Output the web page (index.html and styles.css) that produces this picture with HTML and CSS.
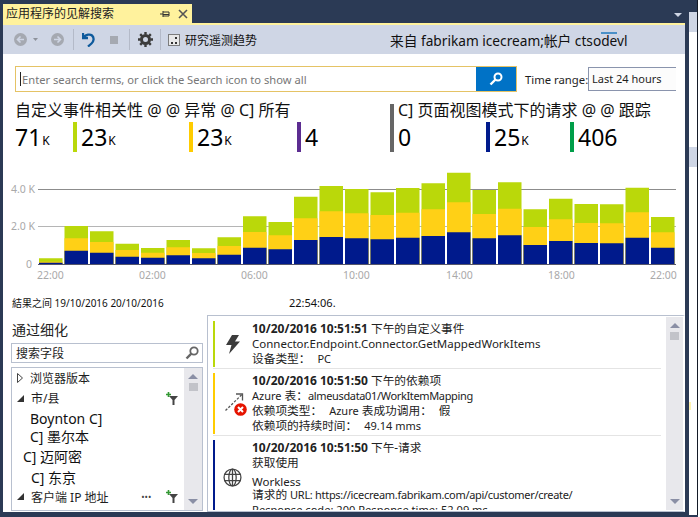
FILE: index.html
```html
<!DOCTYPE html>
<html lang="zh-CN">
<head>
  <meta charset="UTF-8">
  <title>应用程序的见解搜索</title>
  <link rel="stylesheet" href="styles.css">
</head>
<body>
  <div class="shell">
    <div class="window">
      <div class="tabbar">
        <div class="tab">
          <span class="tab-title">应用程序的见解搜索</span>
          <svg class="tab-pin" width="10" height="10" viewBox="0 0 10 10"><path d="M0 5h3M3 2v6M3 3h6v4H3M3 5.500h6" fill="none" stroke="#333" stroke-width="1"/></svg>
          <svg class="tab-close" width="10" height="10" viewBox="0 0 10 10"><path d="M1 1l8 8M9 1l-8 8" stroke="#555" stroke-width="1.600"/></svg>
        </div>
        <svg class="tab-menu" width="8" height="4" viewBox="0 0 8 4"><path d="M0 0h8L4 4z" fill="#cfd6e5"/></svg>
      </div>

      <div class="toolbar">
        <svg class="tool back" width="13" height="13" viewBox="0 0 13 13"><circle cx="6.500" cy="6.500" r="6.500" fill="#a5a9b1"/><path d="M10 6.500H4M6.500 3.500l-3 3 3 3" fill="none" stroke="#cfd6e5" stroke-width="1.600"/></svg>
        <svg class="tool caret" width="5" height="3" viewBox="0 0 5 3"><path d="M0 0h5L2.500 3z" fill="#8d929b"/></svg>
        <svg class="tool forward" width="13" height="13" viewBox="0 0 13 13"><circle cx="6.500" cy="6.500" r="6.500" fill="#a5a9b1"/><path d="M3 6.500h6M6.500 3.500l3 3-3 3" fill="none" stroke="#cfd6e5" stroke-width="1.600"/></svg>
        <span class="tool-sep first"></span>
        <svg class="tool undo" width="13" height="15" viewBox="0 0 13 15"><path d="M1 1v5h5M1.500 5.500C4 2.500 8 1.800 10 3.500c2.500 2.200 1.800 6-.5 8L6 14.500" fill="none" stroke="#0e5a9c" stroke-width="2.300"/></svg>
        <span class="tool stop"></span>
        <span class="tool-sep second"></span>
        <svg class="tool gear" width="15" height="15" viewBox="0 0 15 15"><circle cx="7.500" cy="7.500" r="4" fill="none" stroke="#3c3c3c" stroke-width="3"/><path d="M7.500 0v15M0 7.500h15M2.200 2.200l10.600 10.600M12.800 2.200L2.200 12.800" stroke="#3c3c3c" stroke-width="2.400" stroke-dasharray="2.600 9.800 2.600"/></svg>
        <span class="tool-sep third"></span>
        <svg class="tool trend" width="12" height="12" viewBox="0 0 12 12"><rect x=".5" y=".5" width="11" height="11" fill="#e8e8e8" stroke="#7c7c7c"/><path d="M3 8h2v2H3zM7 3h2v2H7zM7 8h2v2H7z" fill="#333"/></svg>
        <span class="tool-label">研究遥测趋势</span>
        <span class="account">来自 fabrikam icecream;帐户 ctsodevl</span>
        <span class="account-mark"></span>
      </div>

      <div class="content">
        <div class="search-row">
          <div class="search-box">
            <span class="cursor"></span>
            <span class="search-hint">Enter search terms, or click the Search icon to show all</span>
            <div class="search-btn">
              <svg width="14" height="14" viewBox="0 0 14 14"><circle cx="9" cy="5" r="3.500" fill="none" stroke="#fff" stroke-width="2"/><path d="M6.500 7.500L1.500 12.500" stroke="#fff" stroke-width="2.400"/></svg>
            </div>
          </div>
          <span class="range-label">Time range:</span>
          <div class="range-select">Last 24 hours</div>
        </div>

        <div class="metrics">
          <div class="metric-group left">
            <div class="metric-title">自定义事件相关性 @ @ 异常 @ C] 所有</div>
            <div class="metric-row">
              <div class="metric w58"><span class="num">71</span><span class="unit">K</span></div>
              <div class="metric lime w116"><span class="num">23</span><span class="unit">K</span></div>
              <div class="metric yellow w108"><span class="num">23</span><span class="unit">K</span></div>
              <div class="metric purple"><span class="num">4</span></div>
            </div>
          </div>
          <div class="metric-group right">
            <div class="metric-title">C] 页面视图模式下的请求 @ @ 跟踪</div>
            <div class="metric-row">
              <div class="metric w88"><span class="num">0</span></div>
              <div class="metric navy w84"><span class="num">25</span><span class="unit">K</span></div>
              <div class="metric green"><span class="num">406</span></div>
            </div>
          </div>
        </div>

        <svg class="chart" width="682" height="130" viewBox="3 160 682 130">
          <path class="grid-a" d="M38 189.500H676"/>
          <path class="grid-b" d="M38 226.500H676"/>
          <path class="c-lime" d="M39 258.300h23.500V264H39zM64.500 226h23.500v38H64.500zM90 231.300h23.500V264H90zM115.500 243.700h23.500V264h-23.500zM141 248h23.500v16H141zM166.500 240h23.500v24h-23.500zM192 248.300h23.500V264H192zM217.500 237.300h23.500V264h-23.500zM243 216.300h23.500V264H243zM268.500 222h23.500v42h-23.500zM294 196.700h23.500V264H294zM319.500 186h23.500v78h-23.500zM345 189h23.500v75H345zM370.500 192.300h23.500V264h-23.500zM396 188h23.500v76H396zM421.500 183.300h23.500V264h-23.500zM447 172.700h23.500V264H447zM472.500 190h23.500v74h-23.500zM498 182.300h23.500V264H498zM523.500 209.300h23.500V264h-23.500zM549 198.700h23.500V264H549zM574.500 204h23.500v60h-23.500zM600 204.300h23.500V264H600zM625.500 187.700h23.500V264h-23.500zM651 217h23.500v47H651z"/>
          <path class="c-yellow" d="M39 261.700h23.500V264H39zM64.500 238.300h23.500V264H64.500zM90 242h23.500v22H90zM115.500 250h23.500v14h-23.500zM141 252.700h23.500V264H141zM166.500 247.300h23.500V264h-23.500zM192 253h23.500v11H192zM217.500 246h23.500v18h-23.500zM243 232h23.500v32H243zM268.500 235.300h23.500V264h-23.500zM294 218.300h23.500V264H294zM319.500 211.300h23.500V264h-23.500zM345 213.300h23.500V264H345zM370.500 215h23.500v49h-23.500zM396 212.700h23.500V264H396zM421.500 209.300h23.500V264h-23.500zM447 202.300h23.500V264H447zM472.500 214h23.500v50h-23.500zM498 208.700h23.500V264H498zM523.500 227h23.500v37h-23.500zM549 219.300h23.500V264H549zM574.500 223h23.500v41h-23.500zM600 223.300h23.500V264H600zM625.500 212.300h23.500V264h-23.500zM651 232.300h23.500V264H651z"/>
          <path class="c-navy" d="M39 262.700h23.500V264H39zM64.500 250.700h23.500V264H64.500zM90 252.700h23.500V264H90zM115.500 256.700h23.500V264h-23.500zM141 257.700h23.500V264H141zM166.500 255.300h23.500V264h-23.500zM192 258.300h23.500V264H192zM217.500 254.700h23.500V264h-23.500zM243 247.700h23.500V264H243zM268.500 249.300h23.500V264h-23.500zM294 240h23.500v24H294zM319.500 237h23.500v27h-23.500zM345 238.300h23.500V264H345zM370.500 239.300h23.500V264h-23.500zM396 237.700h23.500V264H396zM421.500 236h23.500v28h-23.500zM447 232.300h23.500V264H447zM472.500 238.300h23.500V264h-23.500zM498 235.300h23.500V264H498zM523.500 245h23.500v19h-23.500zM549 241h23.500v23H549zM574.500 243h23.500v21h-23.500zM600 243.300h23.500V264H600zM625.500 237.700h23.500V264h-23.500zM651 247.700h23.500V264H651z"/>
          <path class="axis" d="M38 264.500H676"/>
          <text class="tick" x="11" y="193">4.0 K</text>
          <text class="tick" x="11" y="230">2.0 K</text>
          <text class="tick" x="26" y="268">0</text>
          <text class="tick" x="37" y="279">22:00</text>
          <text class="tick" x="139" y="279">02:00</text>
          <text class="tick" x="241" y="279">06:00</text>
          <text class="tick" x="343" y="279">10:00</text>
          <text class="tick" x="446" y="279">14:00</text>
          <text class="tick" x="548" y="279">18:00</text>
          <text class="tick" x="650" y="279">22:00</text>
        </svg>

        <div class="result-row">
          <span class="result-range">結果之间 19/10/2016 20/10/2016</span>
          <span class="result-time">22:54:06.</span>
        </div>

        <div class="lower">
          <div class="refine">
            <div class="refine-title">通过细化</div>
            <div class="field-search">
              <span>搜索字段</span>
              <svg width="14" height="14" viewBox="0 0 14 14"><circle cx="9" cy="5" r="3.700" fill="none" stroke="#666" stroke-width="1.800"/><path d="M6.300 7.700L1.500 12.500" stroke="#666" stroke-width="2.400"/></svg>
            </div>
            <div class="tree">
              <div class="tree-list">
                <div class="tree-row head">
                  <svg class="arrow" width="6" height="10" viewBox="0 0 6 10"><path d="M.5 .5L5.500 5L.5 9.500z" fill="#fff" stroke="#444"/></svg>
                  <span>浏览器版本</span>
                </div>
                <div class="tree-row head">
                  <svg class="arrow" width="7" height="7" viewBox="0 0 7 7"><path d="M7 0v7H0z" fill="#333"/></svg>
                  <span>市/县</span>
                  <svg class="filter" width="12" height="13" viewBox="0 0 12 13"><path d="M3 4h9L8.500 8v5h-2V8z" fill="#444"/><path d="M2.500 0v5M0 2.500h5" stroke="#339933" stroke-width="1.600"/></svg>
                </div>
                <div class="tree-row city c1">Boynton C]</div>
                <div class="tree-row city c1 tight">C] 墨尔本</div>
                <div class="tree-row city c2">C] 迈阿密</div>
                <div class="tree-row city c3">C] 东京</div>
                <div class="tree-row head">
                  <svg class="arrow" width="7" height="7" viewBox="0 0 7 7"><path d="M7 0v7H0z" fill="#333"/></svg>
                  <span>客户端 IP 地址</span>
                  <span class="more">•••</span>
                  <svg class="filter" width="12" height="13" viewBox="0 0 12 13"><path d="M3 4h9L8.500 8v5h-2V8z" fill="#444"/><path d="M2.500 0v5M0 2.500h5" stroke="#339933" stroke-width="1.600"/></svg>
                </div>
              </div>
              <div class="scroll narrow">
                <span class="up"></span><span class="thumb"></span><span class="down"></span>
              </div>
            </div>
          </div>

          <div class="results">
            <div class="result-list">
              <div class="event lime-edge">
                <div class="event-icon">
                  <svg width="14" height="19" viewBox="0 0 14 19"><path d="M6 0h7L9 6.500h5L3 19l2.500-9H0z" fill="#3c3c3c"/></svg>
                </div>
                <div class="event-text">
                  <div><b>10/20/2016 10:51:51</b> 下午的自定义事件</div>
                  <div class="connector">Connector.Endpoint.Connector.GetMappedWorkItems</div>
                  <div>设备类型：<span class="lt sp">PC</span></div>
                </div>
              </div>
              <div class="event yellow-edge">
                <div class="event-icon dep">
                  <svg width="26" height="26" viewBox="0 0 26 26"><path d="M4.500 19.500L21 3.500" fill="none" stroke="#555" stroke-width="1.300" stroke-dasharray="2.500 1.500"/><path d="M15 3h6.500v6.500" fill="none" stroke="#555" stroke-width="1.300"/><circle cx="19.500" cy="18.500" r="6.300" fill="#e51400"/><path d="M17 16l5 5M22 16l-5 5" stroke="#fff" stroke-width="2"/></svg>
                </div>
                <div class="event-text">
                  <div><b>10/20/2016 10:51:50</b> 下午的依赖项</div>
                  <div><span class="lt">Azure</span> 表：<span class="lt table-path">almeusdata01/WorkItemMapping</span></div>
                  <div>依赖项类型：<span class="lt sp">Azure</span> 表成功调用：<span class="sp">假</span></div>
                  <div>依赖项的持续时间：<span class="lt sp">49.14 mms</span></div>
                </div>
              </div>
              <div class="event navy-edge">
                <div class="event-icon">
                  <svg width="19" height="19" viewBox="0 0 18 18"><g fill="none" stroke="#444" stroke-width="1.200"><circle cx="9" cy="9" r="8"/><ellipse cx="9" cy="9" rx="3.500" ry="8"/><path d="M9 1v16M1.500 6h15M1.500 12h15"/></g></svg>
                </div>
                <div class="event-text">
                  <div><b>10/20/2016 10:51:50</b> 下午-请求</div>
                  <div>获取使用</div>
                  <div class="workless">Workless</div>
                  <div class="request-url">请求的 <span class="url">URL: https://icecream.fabrikam.com/api/customer/create/</span></div>
                  <div class="response">Response code: 200 Response time: 52.09 ms</div>
                </div>
              </div>
            </div>
            <div class="scroll wide">
              <span class="up"></span><span class="thumb"></span><span class="down"></span>
            </div>
          </div>
        </div>
      </div>
    </div>

    <div class="outer-strip">
      <span class="strip-a"></span>
      <span class="strip-b"></span>
      <span class="strip-a"></span>
      <span class="strip-b grow"><span class="strip-mark"></span></span>
    </div>
    <div class="outer-edge"></div>
  </div>
</body>
</html>
```

FILE: styles.css
```css
* {
  box-sizing: border-box;
}
html, body {
  margin: 0;
  height: 517px;
  overflow: hidden;
}
body {
  background-color: #2b3a55;
  color: #1e1e1e;
  font-family: "Noto Sans", "Noto Sans CJK SC", sans-serif;
  font-size: 12px;
}
.shell {
  display: flex;
  height: 517px;
  padding-left: 3px;
}
.window {
  width: 682px;
  height: 512px;
  flex: none;
  display: flex;
  flex-direction: column;
}

/* tab strip */
.tabbar {
  height: 25px;
  flex: none;
  padding-top: 4px;
  border-bottom: 2px solid #fff29d;
  display: flex;
  position: relative;
}
.tab {
  width: 189px;
  height: 19px;
  background: #fff29d;
  display: flex;
  align-items: center;
  padding: 0 4px 0 3px;
  color: #222;
}
.tab-title {
  flex: 1;
  line-height: 19px;
}
.tab-pin {
  margin-right: 8px;
}
.tab-menu {
  position: absolute;
  right: 3px;
  top: 13px;
}

/* toolbar */
.toolbar {
  height: 29px;
  flex: none;
  background: #cfd6e5;
  display: flex;
  align-items: center;
  position: relative;
}
.tool {
  flex: none;
}
.back { margin-left: 11px; }
.caret { margin-left: 6px; }
.forward { margin-left: 13px; }
.tool-sep {
  width: 1px;
  height: 21px;
  background: #b4bac8;
  flex: none;
}
.tool-sep.first { margin-left: 9px; }
.undo { margin-left: 8px; }
.stop {
  width: 8px;
  height: 8px;
  background: #a5a9b1;
  margin-left: 15px;
}
.tool-sep.second { margin-left: 11px; }
.gear { margin-left: 8px; }
.tool-sep.third { margin-left: 7px; }
.trend { margin-left: 7px; }
.tool-label {
  margin-left: 5px;
  color: #111;
}
.account {
  position: absolute;
  left: 387px;
  top: 5px;
  font-size: 13.7px;
  color: #111;
}
.account-mark {
  position: absolute;
  left: 598px;
  top: 7px;
  width: 16px;
  height: 2px;
  background: #4a90c8;
}

/* main area */
.content {
  flex: 1;
  background: #fff;
  display: flex;
  flex-direction: column;
  min-height: 0;
}
.search-row {
  height: 26px;
  margin: 12px 0 0 12px;
  display: flex;
  align-items: center;
  flex: none;
}
.search-box {
  width: 502px;
  height: 26px;
  border: 1px solid #e5c365;
  display: flex;
  align-items: center;
}
.cursor {
  width: 1px;
  height: 14px;
  margin-left: 4px;
  background: #222;
  flex: none;
}
.search-hint {
  flex: 1;
  padding-left: 1px;
  font-size: 11.2px;
  color: #777;
}
.search-btn {
  width: 40px;
  height: 24px;
  background: #0072c6;
  display: flex;
  align-items: center;
  justify-content: center;
}
.range-label {
  margin-left: 8px;
  width: 63px;
  font-size: 11.3px;
  white-space: nowrap;
}
.range-select {
  width: 88px;
  height: 24px;
  line-height: 22px;
  padding-left: 3px;
  font-size: 11px;
  border: 1px solid #8a94ad;
  border-right: 0;
  background: #fcfcfc;
}

/* counters */
.metrics {
  display: flex;
  margin: 12px 0 0 12px;
  height: 48px;
  flex: none;
}
.metric-group.left {
  width: 375px;
  margin-top: -3px;
}
.metric-group.right {
  border-left: 4px solid #666;
  padding-left: 4px;
  flex: 1;
}
.metric-title {
  font-size: 16px;
  line-height: 18px;
  white-space: nowrap;
  color: #111;
}
.metric-group.right .metric-title {
  margin-top: -3px;
}
.metric-group.left .metric-title {
  height: 21px;
}
.metric-row {
  display: flex;
  height: 30px;
}
.metric {
  display: flex;
  align-items: center;
  color: #000;
}
.metric-group.right .metric-row {
  margin-top: 3px;
}
.w58 { width: 58px; }
.w116 { width: 116px; }
.w108 { width: 108px; }
.w88 { width: 88px; }
.w84 { width: 84px; }
.lime, .yellow, .purple, .navy, .green {
  border-left: 4px solid;
  padding-left: 4px;
}
.lime { border-color: #bad80a; }
.yellow { border-color: #ffcc00; }
.purple { border-color: #5c2d91; }
.navy { border-color: #001a8c; }
.green { border-color: #009e49; }
.num {
  font-size: 23px;
  line-height: 30px;
}
.unit {
  font-size: 12px;
  margin: 6px 0 0 1px;
}

/* chart */
.chart {
  display: block;
  flex: none;
  margin-top: 8px;
}
.grid-a { stroke: #8c8c8c; stroke-width: 1; fill: none; }
.grid-b { stroke: #b5b5b5; stroke-width: 1; fill: none; }
.axis { stroke: #55566a; stroke-width: 1; fill: none; }
.c-lime { fill: #bad80a; }
.c-yellow { fill: #ffd016; }
.c-navy { fill: #001a8c; }
.tick {
  font-family: "Noto Sans", sans-serif;
  font-size: 10.5px;
  fill: #a9a9a9;
}

.result-row {
  display: flex;
  height: 25px;
  flex: none;
  padding: 5px 0 0 9px;
  align-items: flex-start;
}
.result-range {
  width: 277px;
  font-size: 10px;
  line-height: 16px;
  color: #111;
}
.result-time {
  font-size: 11px;
  line-height: 16px;
  color: #111;
}

/* bottom panes */
.lower {
  display: flex;
  flex: 1;
  min-height: 0;
}
.refine {
  width: 204px;
  flex: none;
  padding-left: 8px;
  display: flex;
  flex-direction: column;
}
.refine-title {
  font-size: 14px;
  line-height: 20px;
  height: 28px;
  padding: 5px 0 0 1px;
  color: #222;
}
.field-search {
  width: 192px;
  height: 20px;
  border: 1px solid #b8c0cf;
  display: flex;
  align-items: center;
  justify-content: space-between;
  padding: 0 3px 0 4px;
  flex: none;
}
.tree {
  width: 192px;
  flex: 1;
  margin-top: 4px;
  margin-bottom: 1px;
  border: 1px solid #b8c0cf;
  display: flex;
  min-height: 0;
}
.tree-list {
  flex: 1;
  overflow: hidden;
}
.tree-row {
  height: 20.300px;
  display: flex;
  align-items: center;
  white-space: nowrap;
}
.tree-row.head {
  padding-left: 5px;
}
.tree-row.head .arrow {
  margin-right: 7px;
  flex: none;
}
.filter {
  margin-left: auto;
  margin-right: 6px;
}
.more {
  margin-left: auto;
  margin-right: -18px;
  font-size: 9px;
  color: #444;
}
.city {
  font-size: 14px;
  color: #111;
}
.c1 { padding-left: 18px; }
.c2 { padding-left: 11px; }
.c3 { padding-left: 19px; }
.tight { margin-top: -3px; }

.scroll {
  flex: none;
  background: #e8e8ec;
  display: flex;
  flex-direction: column;
  align-items: center;
  padding: 6px 0;
}
.scroll.narrow { width: 18px; }
.scroll.wide { width: 17px; }
.up, .down {
  width: 0;
  height: 0;
  border-left: 5px solid transparent;
  border-right: 5px solid transparent;
  flex: none;
}
.up { border-bottom: 5px solid #8a8fa5; }
.down {
  border-top: 5px solid #8a8fa5;
  margin-top: auto;
}
.thumb {
  width: 9px;
  height: 8px;
  background: #c2c3c9;
  margin-top: 4px;
  flex: none;
}

.results {
  flex: 1;
  min-width: 0;
  border-top: 1px solid #b8c0cf;
  border-left: 1px solid #b8c0cf;
  border-bottom: 1px solid #b8c0cf;
  border-right: 2px solid #fff;
  display: flex;
  padding: 1px 0;
}
.result-list {
  flex: 1;
  min-width: 0;
  overflow: hidden;
  padding: 4px 5px 0 5px;
}
.event {
  display: flex;
  border-left: 2px solid;
  margin-bottom: 6px;
  position: relative;
  line-height: 15px;
}
.event::after {
  content: "";
  position: absolute;
  left: -2px;
  right: 0;
  bottom: -2px;
  height: 1px;
  background: #e4e4e4;
}
.lime-edge { border-color: #bad80a; height: 46px; }
.yellow-edge { border-color: #ffcc00; height: 61px; }
.navy-edge { border-color: #001a8c; height: 75px; }
.navy-edge::after { display: none; }
.event-icon {
  width: 37px;
  flex: none;
  display: flex;
  align-items: center;
  justify-content: center;
  padding-right: 2px;
}
.event-icon.dep {
  padding-right: 0;
}
.event-text {
  white-space: nowrap;
  font-size: 11.700px;
  color: #222;
}
.event-text b {
  font-size: 12px;
  color: #222;
}
.connector { font-size: 11.500px; }
.lt { font-size: 11px; }
.sp { margin-left: 7px; }
.table-path { letter-spacing: -0.35px; }
.workless {
  margin-top: 5px;
  line-height: 13px;
  font-size: 11.500px;
}
.request-url {
  line-height: 12px;
}
.url {
  font-size: 11px;
  letter-spacing: -0.3px;
}
.response {
  margin-top: 1px;
  font-size: 11.100px;
}

/* thin strip right of the window */
.outer-strip {
  width: 9px;
  margin-left: 4px;
  height: 515px;
  flex: none;
  border-right: 1px solid #141a26;
  display: flex;
  flex-direction: column;
  padding-top: 12px;
}
.strip-a {
  height: 20px;
  background: #cfd6e5;
}
.strip-b {
  height: 115px;
  background: #fff;
}
.strip-b.grow {
  flex: 1;
  position: relative;
}
.strip-mark {
  position: absolute;
  left: 0;
  top: 235px;
  width: 2px;
  height: 8px;
  background: #fff2b0;
}
.outer-edge {
  width: 2px;
  background: #fff;
  flex: none;
}
```
